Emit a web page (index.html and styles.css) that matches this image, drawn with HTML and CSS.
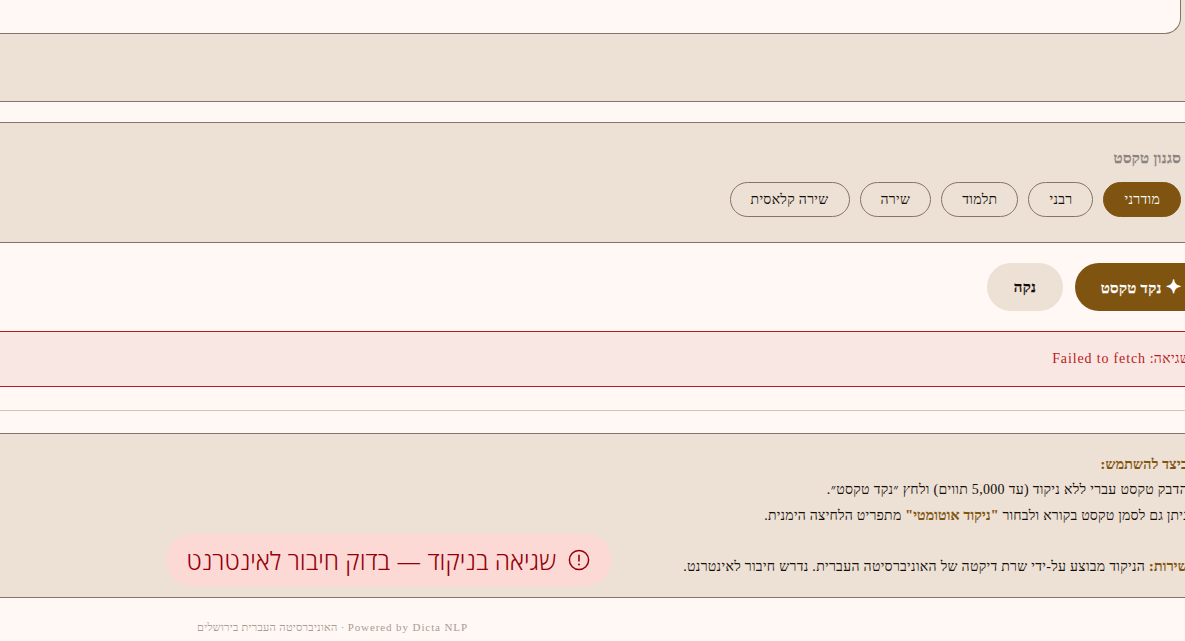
FILE: index.html
```html
<!DOCTYPE html>
<html lang="he" dir="rtl">
<head>
<meta charset="utf-8">
<title>ניקוד טקסט</title>
<link rel="stylesheet" href="styles.css">
</head>
<body>
<div class="page">
  <section class="band band-top">
    <div class="card"></div>
  </section>
  <div class="spacer-a"></div>
  <section class="band band-style">
    <div class="label">סגנון טקסט</div>
    <div class="pills">
      <button class="pill pill-on">מודרני</button>
      <button class="pill">רבני</button>
      <button class="pill">תלמוד</button>
      <button class="pill">שירה</button>
      <button class="pill">שירה קלאסית</button>
    </div>
  </section>
  <div class="actions">
    <button class="btn btn-primary"><span class="star">✦</span> נקד טקסט</button>
    <button class="btn btn-clear">נקה</button>
  </div>
  <div class="error"><span class="error-text">שגיאה: <span class="latin">Failed to fetch</span></span></div>
  <div class="spacer-b"></div>
  <div class="spacer-c"></div>
  <section class="band band-help">
    <p class="line"><strong>ביצד להשתמש:</strong></p>
    <p class="line">הדבק טקסט עברי ללא ניקוד (עד 5,000 תווים) ולחץ ״נקד טקסט״.</p>
    <p class="line line-tight">ניתן גם לסמן טקסט בקורא ולבחור <strong>"ניקוד אוטומטי"</strong> מתפריט הלחיצה הימנית.</p>
    <p class="line line-gap"><strong>שירות:</strong> הניקוד מבוצע על-ידי שרת דיקטה של האוניברסיטה העברית. נדרש חיבור לאינטרנט.</p>
  </section>
  <footer class="footer"><span class="latin-small">Powered by Dicta NLP</span> · האוניברסיטה העברית בירושלים</footer>
</div>
<div class="toast">
  <svg class="toast-icon" viewBox="0 0 22 22" aria-hidden="true">
    <circle cx="11" cy="11" r="9.6" fill="none" stroke="currentColor" stroke-width="1.5"/>
    <path d="M11 5.8v6.6" fill="none" stroke="currentColor" stroke-width="1.6"/>
    <circle cx="11" cy="15.4" r="1" fill="currentColor"/>
  </svg>
  <span>שגיאה בניקוד — בדוק חיבור לאינטרנט</span>
</div>
</body>
</html>
```
FILE: styles.css
```css
* { box-sizing: border-box; }
html, body { margin: 0; height: 641px; overflow: hidden; }
body {
  position: relative;
  background: #fff8f5;
  color: #120d09;
  font-family: "Liberation Serif", serif;
  font-size: 14px;
  letter-spacing: 0.3px;
}
.page { width: 1185px; height: 641px; overflow: hidden; }

.band { background: #ede0d4; border-bottom: 1px solid #857369; }
.band-top { height: 102px; }
.card {
  height: 34px;
  margin-right: 4px;
  margin-left: -30px;
  background: #fff8f5;
  border: 1px solid #857369;
  border-top: 0;
  border-bottom-right-radius: 16px;
}
.spacer-a { height: 20px; }

.band-style {
  height: 121px;
  border-top: 1px solid #857369;
  padding: 27px 4px 0 0;
}
.label {
  height: 16px;
  line-height: 16px;
  font-size: 15px;
  font-weight: 700;
  color: #8a837d;
  -webkit-text-stroke: 0.25px #8a837d;
}
.pills { display: flex; gap: 10px; margin-top: 16px; }
.pill {
  height: 35px;
  padding: 0 20px;
  border: 1px solid #857369;
  border-radius: 18px;
  background: transparent;
  color: #120d09;
  font: inherit;
  letter-spacing: inherit;
}
.pill-on { background: #7f5410; border-color: #7f5410; color: #fff; }

.actions {
  display: flex;
  gap: 12px;
  height: 88px;
  padding-top: 20px;
  margin-right: -24px;
}
.btn {
  height: 48px;
  padding: 0 28px;
  border: 0;
  border-radius: 24px;
  font: inherit;
  font-size: 15px;
  font-weight: 700;
  letter-spacing: inherit;
  -webkit-text-stroke: 0.25px currentColor;
}
.btn-primary { background: #7f5410; color: #fff; padding-left: 26px; }
.btn-clear { background: #ede0d4; color: #120d09; padding: 0 26.5px; }
.star { font-size: 18px; line-height: 1; }

.error {
  height: 56px;
  display: flex;
  align-items: center;
  background: #f9e7e4;
  border-top: 1px solid #ba1a1a;
  border-bottom: 1px solid #ba1a1a;
  color: #ba1a1a;
}
.error-text { margin-right: -5px; }
.latin { letter-spacing: 0.85px; }
.spacer-b { height: 24px; border-bottom: 1px solid #d8c2b8; }
.spacer-c { height: 22px; }

.band-help {
  height: 165px;
  border-top: 1px solid #857369;
  padding-top: 18px;
  overflow: hidden;
}
.line { margin: 0 -3px 0 0; height: 25.3px; line-height: 25px; }
.line strong { color: #7f5410; -webkit-text-stroke: 0.2px #7f5410; }
.line-tight { letter-spacing: 0.23px; }
.line-gap { margin-top: 26px; }
.footer {
  height: 43px;
  padding: 23px 717px 0 0;
  font-size: 11px;
  color: #a89c94;
  white-space: nowrap;
}
.latin-small { letter-spacing: 0.9px; }

.toast {
  position: absolute;
  left: 166px;
  top: 534px;
  width: 446px;
  height: 52px;
  display: flex;
  align-items: center;
  gap: 12px;
  padding: 0 22px;
  border-radius: 26px;
  background: #fdd9d5;
  color: #93000a;
  font-family: "Open Sans", "Liberation Sans", sans-serif;
  font-size: 24.6px;
  font-weight: 300;
  letter-spacing: 0;
  white-space: nowrap;
}
.toast-icon { width: 22px; height: 22px; flex: none; }
```
